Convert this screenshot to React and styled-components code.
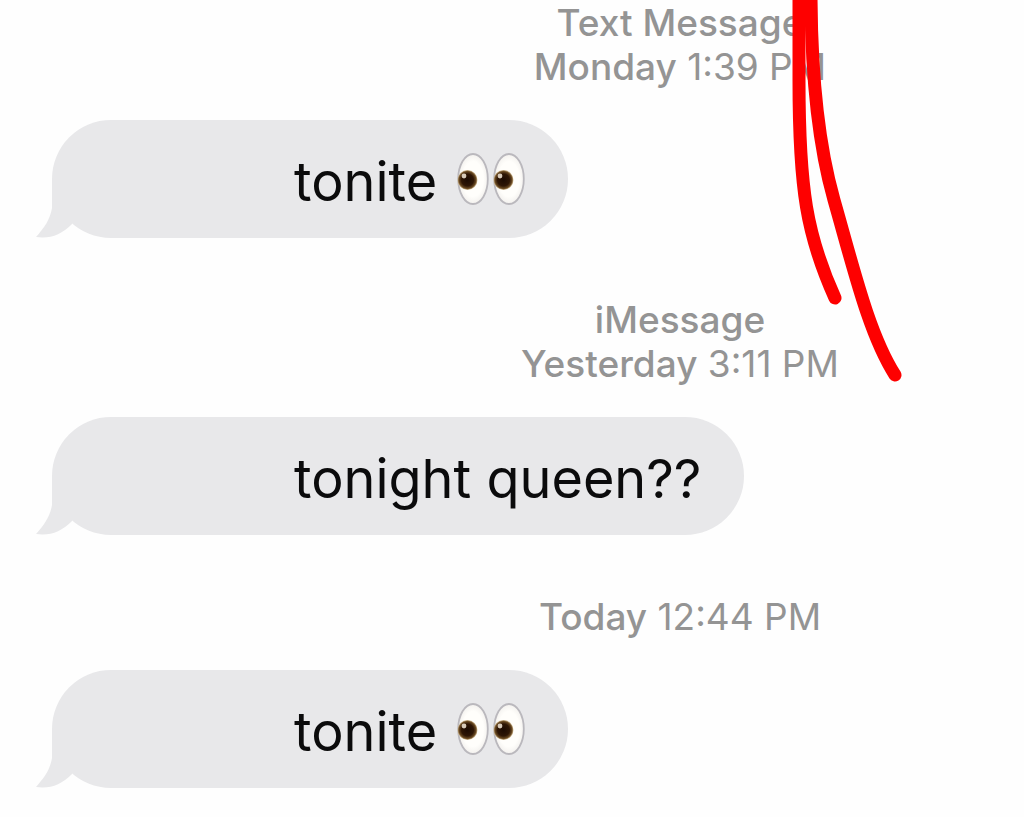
import styled, { createGlobalStyle } from "styled-components";

const conversa = [
  {
    id: 1,
    servico: "Text Message",
    dia: "Monday",
    hora: "1:39 PM",
    texto: "tonite",
    olhos: true,
  },
  {
    id: 2,
    servico: "iMessage",
    dia: "Yesterday",
    hora: "3:11 PM",
    texto: "tonight queen??",
  },
  { id: 3, dia: "Today", hora: "12:44 PM", texto: "tonite", olhos: true },
];

function Eyes() {
  return (
    <SvgEyes viewBox="0 0 68 54" role="img" aria-label="eyes">
      <defs>
        <radialGradient id="iris">
          <stop offset="0" stopColor="#1c0b02" />
          <stop offset="0.6" stopColor="#2e1605" />
          <stop offset="0.85" stopColor="#6a4a22" />
          <stop offset="1" stopColor="#d6c19c" />
        </radialGradient>
        <radialGradient id="globe">
          <stop offset="0.7" stopColor="#fffefb" />
          <stop offset="1" stopColor="#f3f1ee" />
        </radialGradient>
      </defs>
      {[16, 52].map((x) => (
        <g key={x}>
          <ellipse
            cx={x}
            cy="27"
            rx="14.8"
            ry="25"
            fill="url(#globe)"
            stroke="#bab8bd"
            strokeWidth="1.8"
          />
          <circle cx={x - 5.5} cy="28" r="10" fill="url(#iris)" />
          <circle cx={x - 9} cy="24" r="2.4" fill="#d8cbbb" />
        </g>
      ))}
    </SvgEyes>
  );
}

function Message({ texto, olhos }) {
  return (
    <DivBubble>
      <SvgTail viewBox="0 0 50 60" aria-hidden="true">
        <path d="M16 0 V30 C14 42 8 50 0 59 C14 61 25 57 36 46 L50 30 V0 Z" />
      </SvgTail>
      <span>{texto}</span>
      {olhos && <Eyes />}
    </DivBubble>
  );
}

function Marker() {
  return (
    <SvgMarker viewBox="0 0 120 390" aria-hidden="true">
      <path d="M9 -10 V80 C9 190 17 236 45 298" />
      <path d="M21 -10 C21 60 27 140 44 200 C64 270 79 334 105 375" />
    </SvgMarker>
  );
}

export default function App() {
  return (
    <>
      <GlobalStyle />
      <MainThread>
        {conversa.map((item) => (
          <Section key={item.id}>
            <DivStamp>
              {item.servico && <Strong>{item.servico}</Strong>}
              <span>
                <Strong>{item.dia}</Strong> {item.hora}
              </span>
            </DivStamp>
            <Message texto={item.texto} olhos={item.olhos} />
          </Section>
        ))}
        <Marker />
      </MainThread>
    </>
  );
}

const GlobalStyle = createGlobalStyle`
  body {
    margin: 0;
    background: #fefefe;
    font-family: Inter, "Liberation Sans", sans-serif;
  }
`;

const MainThread = styled.main`
  position: relative;
  display: flex;
  flex-direction: column;
  gap: 60px;
  padding: 1px 0 28px 52px;
  overflow: hidden;
`;

const Section = styled.section`
  display: flex;
  flex-direction: column;
  align-items: flex-start;
  gap: 31px;
`;

const DivStamp = styled.div`
  align-self: stretch;
  display: flex;
  flex-direction: column;
  align-items: center;
  padding-left: 284px;
  font-size: 37px;
  line-height: 44px;
  color: #949494;
`;

const Strong = styled.span`
  font-weight: 500;
`;

const DivBubble = styled.div`
  position: relative;
  display: flex;
  align-items: flex-start;
  gap: 20px;
  padding: 32px 43px 26px 242px;
  border-radius: 59px;
  background: #e8e8ea;
  color: #0b0b0c;
  font-size: 54px;
  line-height: 60px;
`;

const SvgTail = styled.svg`
  position: absolute;
  left: -16px;
  bottom: 0;
  width: 50px;
  height: 60px;
  fill: #e8e8ea;
`;

const SvgEyes = styled.svg`
  width: 68px;
  height: 54px;
`;

const SvgMarker = styled.svg`
  position: absolute;
  top: 0;
  left: 790px;
  width: 120px;
  height: 390px;
  fill: none;
  stroke: #fe0000;
  stroke-width: 13px;
  stroke-linecap: round;
`;
